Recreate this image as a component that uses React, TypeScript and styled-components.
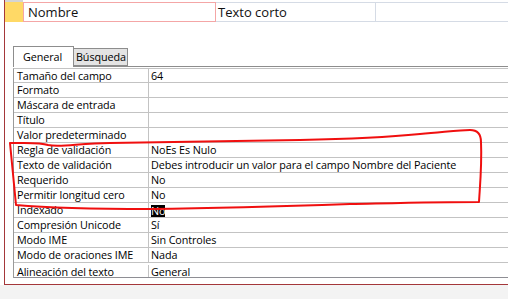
import React from "react";
import styled, { createGlobalStyle } from "styled-components";

const GlobalStyle = createGlobalStyle`
  html, body {
    margin: 0;
    padding: 0;
    background: #ffffff;
  }
  body {
    font-family: "Open Sans", "Noto Sans", "Liberation Sans", sans-serif;
    color: #000;
  }
`;

const properties: { label: string; value: string; selected?: boolean }[] = [
  { label: "Tamaño del campo", value: "64" },
  { label: "Formato", value: "" },
  { label: "Máscara de entrada", value: "" },
  { label: "Título", value: "" },
  { label: "Valor predeterminado", value: "" },
  { label: "Regla de validación", value: "NoEs Es Nulo" },
  { label: "Texto de validación", value: "Debes introducir un valor para el campo Nombre del Paciente" },
  { label: "Requerido", value: "No" },
  { label: "Permitir longitud cero", value: "No" },
  { label: "Indexado", value: "No", selected: true },
  { label: "Compresión Unicode", value: "Sí" },
  { label: "Modo IME", value: "Sin Controles" },
  { label: "Modo de oraciones IME", value: "Nada" },
  { label: "Alineación del texto", value: "General" },
];

const App = () => {
  return (
    <Page>
      <GlobalStyle />
      <Frame>
        <PrevRow>
          <PrevSelector />
        </PrevRow>
        <FieldRow>
          <RowSelector />
          <NameCell>Nombre</NameCell>
          <TypeCell>Texto corto</TypeCell>
          <DescCell />
        </FieldRow>

        <Properties>
          <TabStrip>
            <Tab active>General</Tab>
            <Tab>Búsqueda</Tab>
          </TabStrip>
          <PropGrid>
            {properties.map((p) => (
              <PropRow key={p.label}>
                <PropLabel>{p.label}</PropLabel>
                <PropValue>
                  {p.selected ? <Selected>{p.value}</Selected> : p.value}
                </PropValue>
              </PropRow>
            ))}
          </PropGrid>
        </Properties>
      </Frame>
      <Footer />

      {/* hand-drawn red mark over the validation rows */}
      <Annotation width="508" height="299" viewBox="0 0 508 299">
        <path
          d="M 10 143 C 25 143, 40 142, 48 145 C 60 148, 80 143, 110 143
             C 180 142, 250 141, 300 140 C 350 139, 380 138, 420 134
             C 445 132, 460 130, 470 130 C 478 130, 481 134, 481 142
             C 482 165, 480 185, 479 202 C 440 202, 400 203, 350 204
             C 290 206, 220 208, 150 209 C 100 209, 50 208, 16 205
             C 14 185, 12 165, 10 143 Z"
          fill="none"
          stroke="#f00f0f"
          strokeWidth="2"
          strokeLinejoin="round"
        />
      </Annotation>
    </Page>
  );
};

const Page = styled.div`
  position: relative;
  width: 508px;
  height: 299px;
  overflow: hidden;
  background: #ffffff;
`;

const Frame = styled.div`
  margin-left: 4px;
  height: 285px;
  box-sizing: border-box;
  border-left: 1px solid #a4373a;
  border-bottom: 1px solid #a4373a;
  background: #ffffff;
  overflow: hidden;
`;

const Footer = styled.div`
  height: 14px;
  background: #f3f3f3;
`;

const PrevRow = styled.div`
  display: flex;
  height: 2px;
`;

const PrevSelector = styled.div`
  width: 18px;
  background: #d4d4d4;
`;

const FieldRow = styled.div`
  display: flex;
  height: 20px;
  font-size: 13px;
  line-height: 17px;
  color: #111;
`;

const RowSelector = styled.div`
  width: 18px;
  background: #ffd966;
`;

const NameCell = styled.div`
  width: 193px;
  box-sizing: border-box;
  border: 1px solid #f4a6a6;
  padding: 1px 0 0 4px;
`;

const TypeCell = styled.div`
  width: 160px;
  box-sizing: border-box;
  border-top: 1px solid #d5dbe5;
  border-bottom: 1px solid #d5dbe5;
  border-right: 1px solid #d5dbe5;
  padding: 1px 0 0 2px;
`;

const DescCell = styled.div`
  flex: 1;
  box-sizing: border-box;
  border-top: 1px solid #d5dbe5;
  border-bottom: 1px solid #d5dbe5;
`;

const Properties = styled.div`
  margin-top: 24px;
  padding-left: 8px;
  font-size: 10.8px;
  letter-spacing: -0.1px;
`;

const TabStrip = styled.div`
  display: flex;
  align-items: flex-end;
  height: 20px;
  border-bottom: 1px solid #8d8d8d;
`;

const Tab = styled.div<{ active?: boolean }>`
  box-sizing: border-box;
  height: ${(p) => (p.active ? "21px" : "18px")};
  margin-bottom: ${(p) => (p.active ? "-1px" : "0")};
  width: ${(p) => (p.active ? "61px" : "54px")};
  border: 1px solid #8d8d8d;
  border-bottom: ${(p) => (p.active ? "none" : "1px solid #8d8d8d")};
  border-left: ${(p) => (p.active ? "1px solid #8d8d8d" : "none")};
  background: ${(p) => (p.active ? "#ffffff" : "#e4e4e4")};
  padding: ${(p) => (p.active ? "3px 0 0 9px" : "1px 0 0 2px")};
  line-height: 14px;
  white-space: nowrap;
`;

const PropGrid = styled.div`
  margin-top: 1px;
  border-top: 1px solid #c3c3c3;
  border-left: 1px solid #9a9a9a;
`;

const PropRow = styled.div`
  display: grid;
  grid-template-columns: 135px 1fr;
  height: 15px;
  box-sizing: border-box;
  border-bottom: 1px solid #c3c3c3;
  line-height: 14px;
  overflow: hidden;
  white-space: nowrap;

  &:first-child {
    height: 14px;
    line-height: 13px;
  }

  &:last-child {
    border-bottom-color: #8e8e94;
    padding-top: 2px;
  }
`;

const PropLabel = styled.div`
  border-right: 1px solid #c3c3c3;
  padding-left: 3px;
  overflow: hidden;
`;

const PropValue = styled.div`
  padding-left: 2px;
  overflow: hidden;
`;

const Selected = styled.span`
  background: #000;
  color: #fff;
  display: inline-block;
  line-height: 12px;
  margin-top: 2px;
`;

const Annotation = styled.svg`
  position: absolute;
  left: 0;
  top: 0;
  pointer-events: none;
`;

export default App;
